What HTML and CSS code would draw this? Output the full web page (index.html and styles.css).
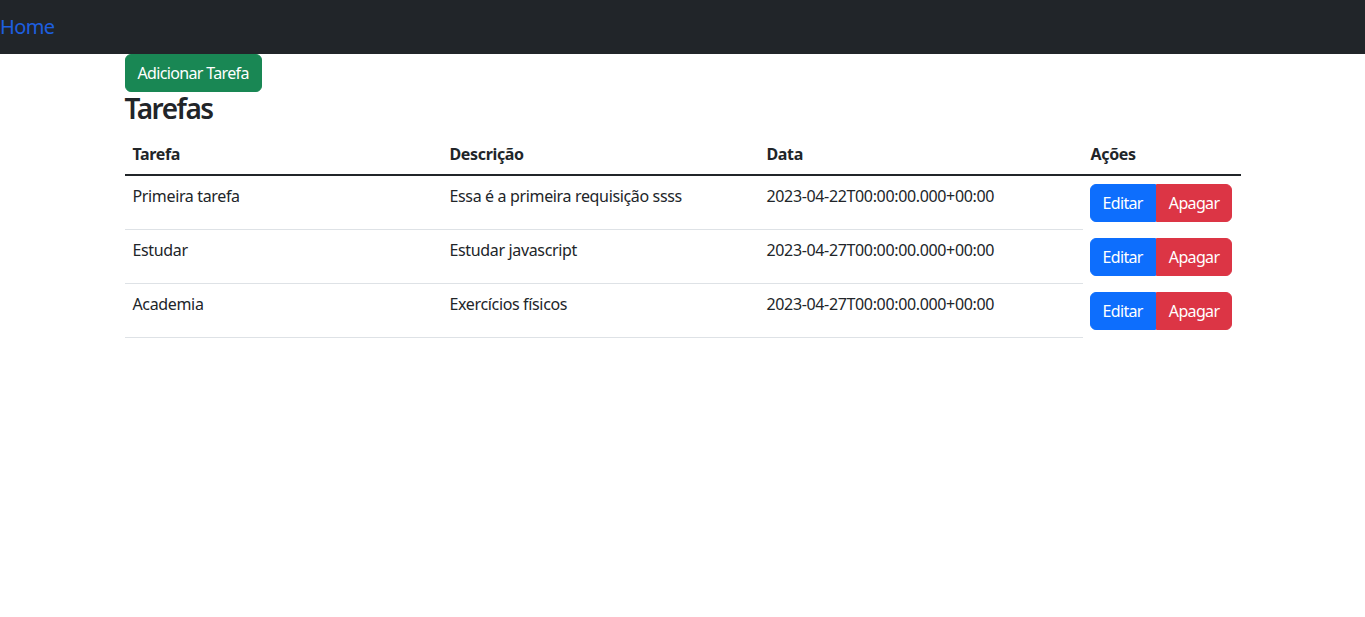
FILE: index.html
```html
<!DOCTYPE html>
<html lang="pt-BR">
<head>
<meta charset="utf-8">
<title>Tarefas</title>
<link rel="stylesheet" href="styles.css">
</head>
<body>
<nav class="navbar">
  <a class="nav-home" href="#">Home</a>
</nav>
<main class="container">
  <button class="btn btn-success">Adicionar Tarefa</button>
  <h3 class="title">Tarefas</h3>
  <table class="table">
    <thead>
      <tr>
        <th class="col-task">Tarefa</th>
        <th class="col-desc">Descrição</th>
        <th class="col-date">Data</th>
        <th class="col-actions">Ações</th>
      </tr>
    </thead>
    <tbody>
      <tr>
        <td>Primeira tarefa</td>
        <td>Essa é a primeira requisição ssss</td>
        <td>2023-04-22T00:00:00.000+00:00</td>
        <td class="actions"><div class="btn-group"><button class="btn btn-primary">Editar</button><button class="btn btn-danger">Apagar</button></div></td>
      </tr>
      <tr>
        <td>Estudar</td>
        <td>Estudar javascript</td>
        <td>2023-04-27T00:00:00.000+00:00</td>
        <td class="actions"><div class="btn-group"><button class="btn btn-primary">Editar</button><button class="btn btn-danger">Apagar</button></div></td>
      </tr>
      <tr>
        <td>Academia</td>
        <td>Exercícios físicos</td>
        <td>2023-04-27T00:00:00.000+00:00</td>
        <td class="actions"><div class="btn-group"><button class="btn btn-primary">Editar</button><button class="btn btn-danger">Apagar</button></div></td>
      </tr>
    </tbody>
  </table>
</main>
</body>
</html>
```
FILE: styles.css
```css
* { box-sizing: border-box; }
body {
  margin: 0;
  font-family: "Noto Sans", "Open Sans", sans-serif;
  font-size: 16px;
  line-height: 1.5;
  letter-spacing: -0.35px;
  color: #212529;
  background: #fff;
}
.navbar {
  height: 54px;
  background: #212529;
  display: flex;
  align-items: center;
}
.nav-home {
  color: #1d5fe0;
  text-decoration: none;
  font-size: 20px;
  line-height: 30px;
  letter-spacing: -0.6px;
}
.container {
  width: 1116px;
  margin: 0 auto;
}
.btn {
  display: inline-block;
  font-family: inherit;
  font-size: 16px;
  line-height: 24px;
  letter-spacing: -0.65px;
  padding: 6px 12px;
  border: 1px solid transparent;
  border-radius: 6px;
  color: #fff;
  cursor: pointer;
}
.btn-success { background: #198754; border-color: #198754; }
.btn-primary { background: #0d6efd; border-color: #0d6efd; }
.btn-danger { background: #dc3545; border-color: #dc3545; }
.title {
  margin: 0 0 8px;
  font-size: 28px;
  font-weight: 600;
  line-height: 1.2;
  letter-spacing: -1.5px;
}
.table {
  width: 100%;
  table-layout: fixed;
  border-collapse: collapse;
}
.table th, .table td {
  padding: 8px;
  text-align: left;
  vertical-align: top;
}
.table th { font-weight: 700; }
.table tbody { border-top: 2px solid #212529; }
.table td { border-bottom: 1px solid #dee2e6; }
.table td.actions { border-bottom: none; }
.col-task { width: 317px; }
.col-desc { width: 317px; }
.col-date { width: 324px; }
.col-actions { width: 158px; }
.btn-group { display: inline-flex; margin-left: -1px; }
.btn-group .btn-primary { border-radius: 6px 0 0 6px; }
.btn-group .btn-danger { border-radius: 0 6px 6px 0; }
```
